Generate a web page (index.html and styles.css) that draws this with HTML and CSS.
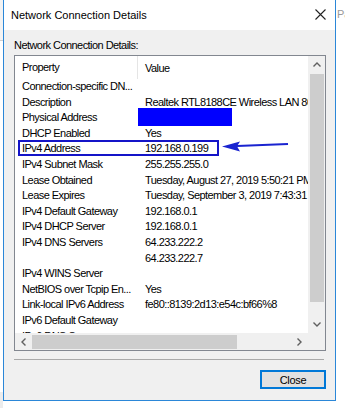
FILE: index.html
```html
<!DOCTYPE html>
<html lang="en">
<head>
  <meta charset="UTF-8">
  <title>Network Connection Details</title>
  <link rel="stylesheet" href="styles.css">
</head>
<body>

  <div class="edge-left"></div>

  <div class="dialog">
    <div class="titlebar">
      <span class="title">Network Connection Details</span>
      <svg class="close-x" width="11" height="11" viewBox="0 0 11 11">
        <path d="M0.5 0.5 L10.5 10.5 M10.5 0.5 L0.5 10.5" stroke="#222" stroke-width="1.1" fill="none"/>
      </svg>
    </div>

    <div class="content">
      <div class="label">Network Connection Details:</div>

      <div class="listbox">
        <div class="list">
          <div class="list-header">
            <div class="col-prop">Property</div>
            <div class="col-val">Value</div>
          </div>

          <div class="row"><div class="col-prop">Connection-specific DN...</div><div class="col-val"></div></div>
          <div class="row"><div class="col-prop">Description</div><div class="col-val">Realtek RTL8188CE Wireless LAN 802.11n PCI-E NIC</div></div>
          <div class="row"><div class="col-prop">Physical Address</div><div class="col-val"><div class="redact"></div></div></div>
          <div class="row"><div class="col-prop">DHCP Enabled</div><div class="col-val">Yes</div></div>
          <div class="row"><div class="col-prop">IPv4 Address</div><div class="col-val">192.168.0.199</div></div>
          <div class="row"><div class="col-prop">IPv4 Subnet Mask</div><div class="col-val">255.255.255.0</div></div>
          <div class="row"><div class="col-prop">Lease Obtained</div><div class="col-val">Tuesday, August 27, 2019 5:50:21 PM</div></div>
          <div class="row"><div class="col-prop">Lease Expires</div><div class="col-val">Tuesday, September 3, 2019 7:43:31 PM</div></div>
          <div class="row"><div class="col-prop">IPv4 Default Gateway</div><div class="col-val">192.168.0.1</div></div>
          <div class="row"><div class="col-prop">IPv4 DHCP Server</div><div class="col-val">192.168.0.1</div></div>
          <div class="row"><div class="col-prop">IPv4 DNS Servers</div><div class="col-val">64.233.222.2</div></div>
          <div class="row"><div class="col-prop"></div><div class="col-val">64.233.222.7</div></div>
          <div class="row"><div class="col-prop">IPv4 WINS Server</div><div class="col-val"></div></div>
          <div class="row"><div class="col-prop">NetBIOS over Tcpip En...</div><div class="col-val">Yes</div></div>
          <div class="row"><div class="col-prop">Link-local IPv6 Address</div><div class="col-val">fe80::8139:2d13:e54c:bf66%8</div></div>
          <div class="row"><div class="col-prop">IPv6 Default Gateway</div><div class="col-val"></div></div>
          <div class="row"><div class="col-prop">IPv6 DNS Servers</div><div class="col-val"></div></div>

          <!-- annotation drawn over the list -->
          <svg class="annotation" width="293" height="277" viewBox="0 0 293 277">
            <rect x="4" y="85" width="199" height="14" fill="none" stroke="#1414c8" stroke-width="2"/>
            <path d="M273 88 L222 90" stroke="#1a24d0" stroke-width="2" fill="none"/>
            <path d="M207 90.5 L225 85.5 L222 90.3 L225 95.5 Z" fill="#1a24d0"/>
          </svg>
        </div>

        <div class="vscroll">
          <div class="sb-btn">
            <svg width="8" height="5" viewBox="0 0 8 5"><path d="M0.5 4.5 L4 1 L7.5 4.5" stroke="#606060" stroke-width="1.4" fill="none"/></svg>
          </div>
          <div class="vthumb"></div>
          <div class="sb-fill"></div>
          <div class="sb-btn">
            <svg width="8" height="5" viewBox="0 0 8 5"><path d="M0.5 0.5 L4 4 L7.5 0.5" stroke="#606060" stroke-width="1.4" fill="none"/></svg>
          </div>
        </div>

        <div class="hscroll">
          <div class="sb-btn">
            <svg width="5" height="8" viewBox="0 0 5 8"><path d="M4.5 0.5 L1 4 L4.5 7.5" stroke="#606060" stroke-width="1.4" fill="none"/></svg>
          </div>
          <div class="hthumb"></div>
          <div class="sb-fill"></div>
          <div class="sb-btn">
            <svg width="5" height="8" viewBox="0 0 5 8"><path d="M0.5 0.5 L4 4 L0.5 7.5" stroke="#606060" stroke-width="1.4" fill="none"/></svg>
          </div>
        </div>

        <div class="corner"></div>
      </div>

      <div class="separator"></div>

      <div class="buttons">
        <button class="btn-close">Close</button>
      </div>
    </div>
  </div>

  <div class="edge-right">Pa</div>

</body>
</html>
```

FILE: styles.css
```css
body {
  margin: 0;
  height: 408px;
  overflow: hidden;
  display: flex;
  align-items: flex-start;
  background: #ffffff;
  font-family: 'Liberation Sans', Arial, sans-serif;
  font-size: 11px;
  color: #000;
}

.edge-left {
  width: 3px;
  height: 408px;
  background: linear-gradient(#f3f3f3 0 40px, #cfcfcf 40px 41px, #ffffff 41px 392px, #ececec 392px);
}

.edge-right {
  flex: 1;
  overflow: hidden;
  white-space: nowrap;
  color: #9a9a9a;
  padding-top: 8px;
  padding-left: 1px;
}

.dialog {
  width: 333px;
  height: 401px;
  box-sizing: border-box;
  border: 1px solid #2b87d8;
  border-top: none;
  background: #f0f0f0;
  display: flex;
  flex-direction: column;
}

.titlebar {
  height: 30px;
  background: #ffffff;
  display: flex;
  align-items: center;
  justify-content: space-between;
  padding-left: 7px;
  padding-right: 9px;
}

.title {
  font-size: 11px;
  color: #000;
}

.close-x {
  margin-top: -1px;
}

.content {
  padding: 0 9px 0 10px;
}

.label {
  margin-top: 8px;
  line-height: 14px;
  letter-spacing: -0.55px;
}

.listbox {
  margin-top: 3px;
  width: 312px;
  height: 296px;
  box-sizing: border-box;
  border: 1px solid #828790;
  display: grid;
  grid-template-columns: 293px 17px;
  grid-template-rows: 277px 17px;
  background: #fff;
}

.list {
  position: relative;
  overflow: hidden;
  background: #fff;
}

.list-header {
  height: 23px;
  display: flex;
  align-items: center;
}

.list-header .col-prop {
  border-right: 1px solid #e5e5e5;
  height: 23px;
  line-height: 23px;
}

.list-header .col-val {
  padding-left: 7px;
}

.row {
  height: 15.6px;
  line-height: 15.6px;
  display: flex;
}

.col-prop {
  width: 123px;
  flex: none;
  box-sizing: border-box;
  padding-left: 7px;
  white-space: nowrap;
  overflow: hidden;
  letter-spacing: -0.55px;
}

.col-val {
  padding-left: 7px;
  white-space: nowrap;
  letter-spacing: -0.55px;
}

.redact {
  width: 94px;
  height: 18px;
  margin: -2.4px 0 0 -7px;
  background: #0000ff;
}

.annotation {
  position: absolute;
  left: 0;
  top: 0;
}

.vscroll {
  background: #f0f0f0;
  display: flex;
  flex-direction: column;
}

.hscroll {
  background: #f0f0f0;
  display: flex;
}

.sb-btn {
  width: 17px;
  height: 17px;
  flex: none;
  display: flex;
  align-items: center;
  justify-content: center;
}

.vthumb {
  height: 228px;
  margin: 1px 1px 0 2px;
  background: #cdcdcd;
}

.hthumb {
  width: 205px;
  margin: 2px 0 1px 0;
  background: #cdcdcd;
}

.sb-fill {
  flex: 1;
}

.corner {
  background: #f0f0f0;
}

.separator {
  margin-top: 8px;
  width: 310px;
  height: 1px;
  background: #a9a9a9;
}

.buttons {
  display: flex;
  justify-content: flex-end;
  margin-top: 10px;
}

.btn-close {
  width: 66px;
  height: 19px;
  box-sizing: border-box;
  border: 2px solid #0078d7;
  background: #e1e1e1;
  font-family: 'Liberation Sans', Arial, sans-serif;
  font-size: 11px;
  letter-spacing: -0.3px;
  color: #000;
  padding: 0;
}
```
